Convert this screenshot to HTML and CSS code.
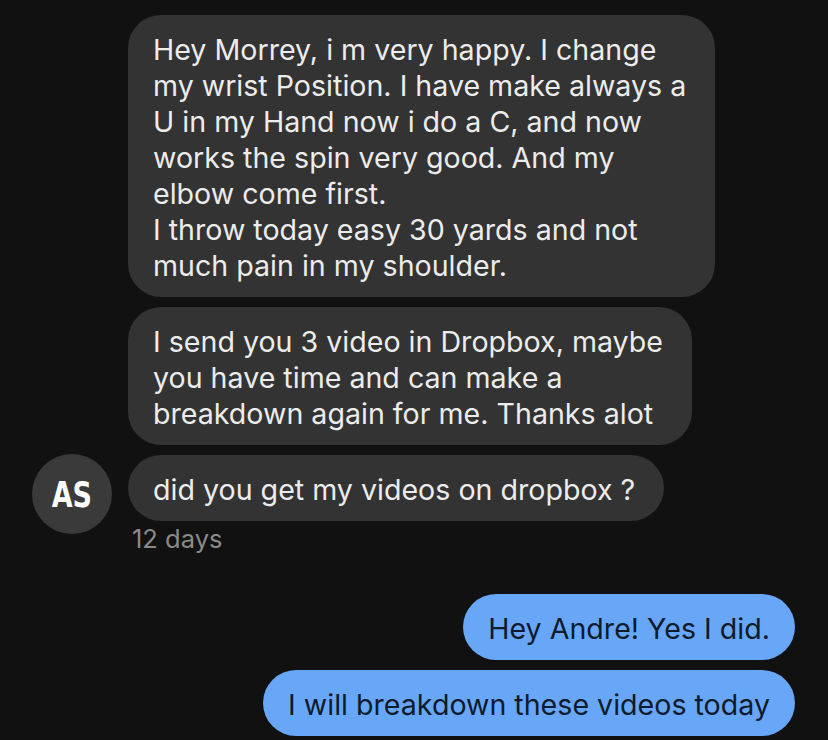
FILE: index.html
```html
<!DOCTYPE html>
<html>
<head>
<meta charset="utf-8">
<link rel="stylesheet" href="styles.css">
</head>
<body>
<div class="chat">
  <div class="incoming">
    <div class="bubble gray">Hey Morrey, i m very happy. I change<br>my wrist Position. I have make always a<br>U in my Hand now i do a C, and now<br>works the spin very good. And my<br>elbow come first.<br>I throw today easy 30 yards and not<br>much pain in my shoulder.</div>
    <div class="bubble gray">I send you 3 video in Dropbox, maybe<br>you have time and can make a<br>breakdown again for me. Thanks alot</div>
    <div class="last-row">
      <div class="avatar"><span class="initials">AS</span></div>
      <div class="bubble gray">did you get my videos on dropbox ?</div>
    </div>
    <div class="time">12 days</div>
  </div>
  <div class="outgoing">
    <div class="bubble blue">Hey Andre! Yes I did.</div>
    <div class="bubble blue">I will breakdown these videos today</div>
  </div>
</div>
</body>
</html>
```
FILE: styles.css
```css
html, body {
  margin: 0;
  padding: 0;
  background: #111111;
}
body {
  width: 828px;
  height: 740px;
  overflow: hidden;
  font-family: Inter, "Noto Sans", sans-serif;
}
.chat {
  display: flex;
  flex-direction: column;
  padding-top: 15px;
}
.incoming {
  display: flex;
  flex-direction: column;
  align-items: flex-start;
  gap: 10px;
  padding-left: 128px;
}
.bubble {
  font-size: 28.6px;
  line-height: 36px;
  padding: 17px 29px 13px 25px;
  border-radius: 33px;
  white-space: nowrap;
}
.gray {
  background: #333333;
  color: #ececec;
}
.last-row {
  display: flex;
  align-items: flex-start;
  gap: 16px;
  margin-left: -96px;
}
.avatar {
  width: 80px;
  height: 80px;
  border-radius: 50%;
  background: #3a3a3a;
  color: #ffffff;
  display: flex;
  align-items: center;
  justify-content: center;
  font-family: "DejaVu Sans", sans-serif;
  font-weight: bold;
  font-size: 36px;
  margin-top: -1px;
}
.initials {
  display: inline-block;
  transform: scaleX(0.75);
}
.time {
  color: #8a8a8a;
  font-size: 25.5px;
  line-height: 30px;
  margin-top: -20px;
  padding-left: 4px;
}
.outgoing {
  display: flex;
  flex-direction: column;
  align-items: flex-end;
  gap: 10px;
  padding-right: 33px;
  margin-top: 40px;
}
.blue {
  background: #68a6f8;
  color: #0e1b2c;
  padding: 17px 25px 13px 25px;
}
```
